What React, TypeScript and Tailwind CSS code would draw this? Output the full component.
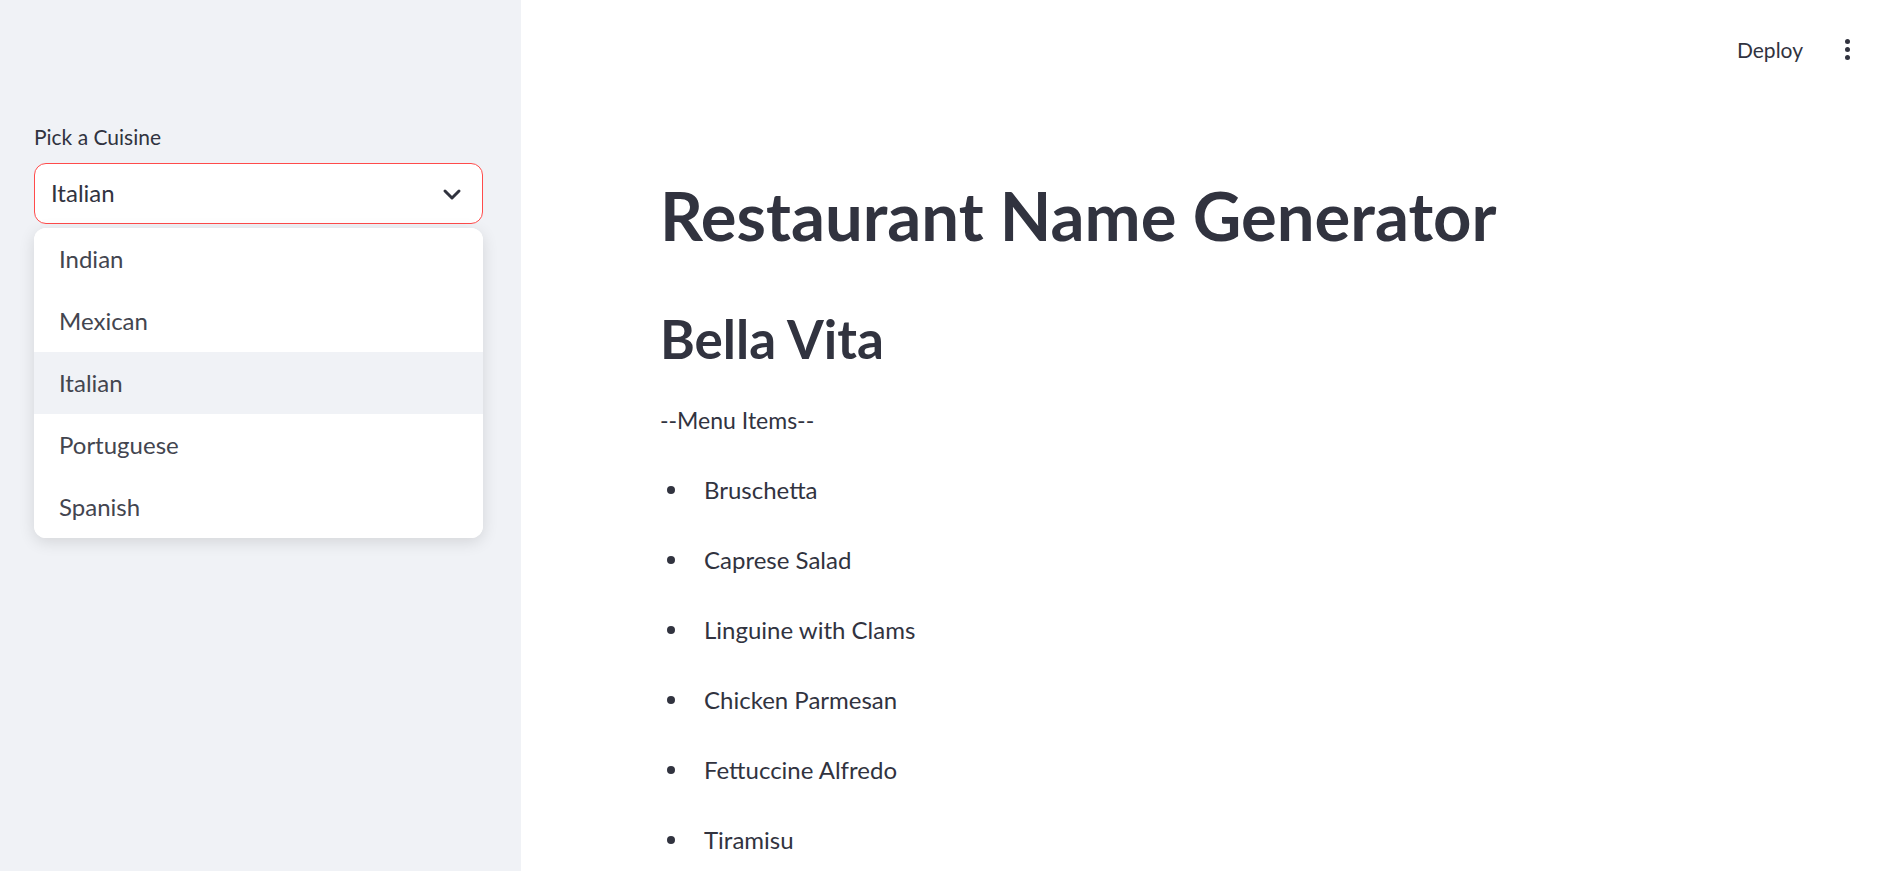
import { useState } from "react";

// Options for the cuisine picker
const cuisines = ["Indian", "Mexican", "Italian", "Portuguese", "Spanish"];

// Generated menu items
const menuItems = [
    "Bruschetta",
    "Caprese Salad",
    "Linguine with Clams",
    "Chicken Parmesan",
    "Fettuccine Alfredo",
    "Tiramisu",
];

export default function App() {
    const [cuisine, setCuisine] = useState("Italian");
    const [open, setOpen] = useState(true);

    return (
        <div className="flex h-[871px] w-full overflow-hidden font-['Lato','Liberation_Sans',sans-serif] text-[#31333f]">
            {/* Sidebar */}
            <aside className="w-[521px] shrink-0 bg-[#f0f2f6] px-[34px] pt-[124px]">
                <label className="block text-[21px] leading-[1.2]">Pick a Cuisine</label>

                <div className="relative mt-[14px] w-[449px]">
                    <button
                        onClick={() => setOpen(!open)}
                        className="flex h-[61px] w-full items-center justify-between rounded-[12px] border border-[#ff4b4b] bg-white pl-[16px] pr-[20px] text-left"
                    >
                        <span className="text-[24px] leading-[1.2]">{cuisine}</span>
                        <svg width="20" height="20" viewBox="0 0 20 20" fill="none">
                            <path d="M3 7l7 7 7-7" stroke="#31333f" strokeWidth={3} strokeLinecap="round" strokeLinejoin="round" />
                        </svg>
                    </button>

                    {/* Dropdown menu */}
                    {open && (
                        <ul className="absolute left-0 right-0 top-full mt-[4px] overflow-hidden rounded-[12px] bg-white shadow-[0_4px_16px_rgba(0,0,0,0.12)]">
                            {cuisines.map((c) => (
                                <li
                                    key={c}
                                    onClick={() => {
                                        setCuisine(c);
                                        setOpen(false);
                                    }}
                                    className={`flex h-[62px] cursor-pointer items-center pl-[25px] text-[24px] leading-[1.2] text-[#43454f] ${c === cuisine ? "bg-[#f0f2f6]" : "bg-white"}`}
                                >
                                    {c}
                                </li>
                            ))}
                        </ul>
                    )}
                </div>
            </aside>

            {/* Main */}
            <main className="flex-1 bg-white">
                <header className="flex items-center justify-end gap-[42px] pr-[52px] pt-[37px]">
                    <span className="text-[21px] leading-[1.2]">Deploy</span>
                    <div className="flex flex-col gap-[3px]">
                        <span className="block h-[5px] w-[5px] rounded-full bg-[#31333f]" />
                        <span className="block h-[5px] w-[5px] rounded-full bg-[#31333f]" />
                        <span className="block h-[5px] w-[5px] rounded-full bg-[#31333f]" />
                    </div>
                </header>

                <div className="pl-[139px] pt-[113px]">
                    <h1 className="text-[67px] font-bold leading-[1.2]">Restaurant Name Generator</h1>
                    <h2 className="mt-[51px] text-[53px] font-bold leading-[1.2]">Bella Vita</h2>
                    <p className="mt-[37px] text-[23px] leading-[1.2]">--Menu Items--</p>
                    <ul className="mt-[20px]">
                        {menuItems.map((item) => (
                            <li key={item} className="flex items-center text-[24px] leading-[70px]">
                                <span className="ml-[7px] mr-[29px] block h-[8px] w-[8px] rounded-full bg-[#31333f]" />
                                {item}
                            </li>
                        ))}
                    </ul>
                </div>
            </main>
        </div>
    );
}
